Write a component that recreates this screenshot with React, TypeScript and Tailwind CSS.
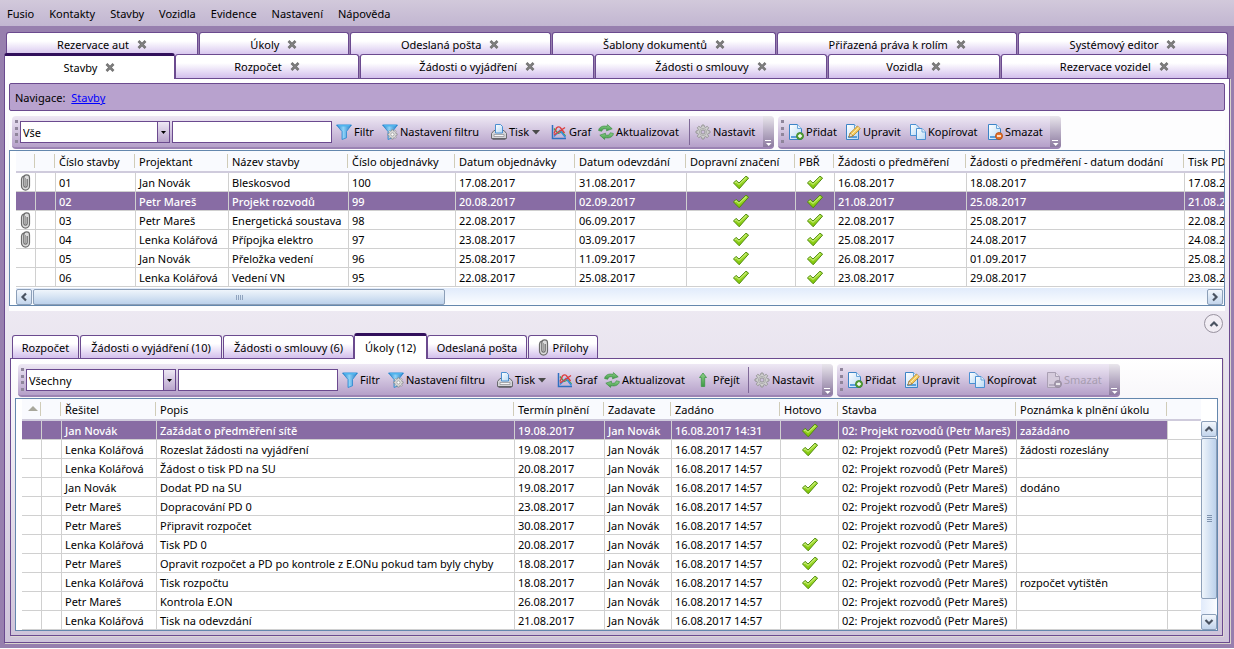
import React, { useState } from "react";
import clsx from "clsx";

type IconName =
  | "filter"
  | "filterSettings"
  | "print"
  | "chart"
  | "refresh"
  | "go"
  | "gear"
  | "add"
  | "edit"
  | "copy"
  | "remove"
  | "removeDisabled";

interface ToolItem {
  label: string;
  icon: IconName;
  width: string;
  disabled?: boolean;
  dropdown?: boolean;
  separated?: boolean;
}

interface Column {
  label: string;
  width: string;
  center?: boolean;
}

const GEAR =
  "M7 1h2l.4 1.9 1.2.5 1.6-1.1 1.5 1.5-1.1 1.6.5 1.2 1.9.4v2l-1.9.4-.5 1.2 1.1 1.6-1.5 1.5-1.6-1.1-1.2.5L9 15H7l-.4-1.9-1.2-.5-1.6 1.1-1.5-1.5 1.1-1.6-.5-1.2L1 9V7l1.9-.4.5-1.2-1.1-1.6 1.5-1.5 1.6 1.1 1.2-.5z";

// Shared gradients for the toolbar icons
const IconDefs = () => (
  <svg width="0" height="0" className="absolute" aria-hidden="true">
    <defs>
      <linearGradient id="funnel" x1="0" y1="0" x2="1" y2="0">
        <stop offset="0" stopColor="#1f7cc4" />
        <stop offset="0.45" stopColor="#8fd3f8" />
        <stop offset="1" stopColor="#2079c4" />
      </linearGradient>
      <linearGradient id="page" x1="0" y1="0" x2="1" y2="1">
        <stop offset="0" stopColor="#ffffff" />
        <stop offset="1" stopColor="#b7d9f5" />
      </linearGradient>
      <linearGradient id="check" x1="0" y1="0" x2="0" y2="1">
        <stop offset="0" stopColor="#b4e84a" />
        <stop offset="1" stopColor="#7cc400" />
      </linearGradient>
      <linearGradient id="leaf" x1="0" y1="0" x2="0" y2="1">
        <stop offset="0" stopColor="#8fd08a" />
        <stop offset="1" stopColor="#3d9a45" />
      </linearGradient>
    </defs>
  </svg>
);

const PageShape = ({ muted }: { muted?: boolean }) => (
  <>
    <path
      d="M1.500.5h8l4 4v11h-12z"
      fill={muted ? "#d5cbdc" : "url(#page)"}
      stroke={muted ? "#a99fb3" : "#3d84c6"}
    />
    <path
      d="M9.500.5v4h4"
      fill={muted ? "#e3dce8" : "#e8f3fc"}
      stroke={muted ? "#a99fb3" : "#69a5da"}
    />
    <path d="M3 12h9v2H3z" fill={muted ? "#b6acbf" : "#5a9fdb"} />
  </>
);

const Icon = ({ name }: { name: IconName }) => (
  <svg
    width="16"
    height="16"
    viewBox="0 0 16 16"
    className="shrink-0"
    aria-hidden="true"
  >
    {name === "filter" && (
      <>
        <path
          d="M.5 1h15l-5 6.500v6.300L6 15.500v-8z"
          fill="url(#funnel)"
          stroke="#2a86cf"
          strokeWidth=".8"
        />
        <path d="M1.500.8h13l-1.300 1.600H2.800z" fill="#4fb4ee" />
      </>
    )}
    {name === "filterSettings" && (
      <>
        <path
          d="M.5 1h15l-5 6.500v6.300L6 15.500v-8z"
          fill="url(#funnel)"
          stroke="#2a86cf"
          strokeWidth=".8"
        />
        <path d="M1.500.8h13l-1.300 1.600H2.800z" fill="#4fb4ee" />
        <g transform="translate(5 5) scale(.68)">
          <path d={GEAR} fill="#dcdcdc" stroke="#8a8a8a" />
          <circle cx="8" cy="8" r="2.400" fill="#fff" stroke="#8a8a8a" />
        </g>
      </>
    )}
    {name === "print" && (
      <>
        <path
          d="M3 6.500h10l2.500 3v5H.5v-5z"
          fill="#d4d4d8"
          stroke="#6b6b70"
        />
        <path d="M4.500 9V.5h5l2 2V9z" fill="url(#page)" stroke="#4b8fd0" />
        <path d="M3 10.500h10v2H3z" fill="#f8f8f8" stroke="#8d8d92" strokeWidth=".7" />
        <path d="M1.500 15.200h13" stroke="#55555a" />
      </>
    )}
    {name === "chart" && (
      <>
        <path d="M1.500 1v13.500H15" fill="none" stroke="#2f6fc0" strokeWidth="1.500" />
        <path d="m3 4.500 4 5 4-1.500 3.500 4" fill="none" stroke="#3fa650" strokeWidth="1.300" />
        <path d="m3 12.500 6-6 5.500 7" fill="none" stroke="#3b8de0" strokeWidth="1.500" />
        <path
          d="M3 9.500 5.500 4Q8 1.500 10 4.500L13.500 9M3 11l4.500-3L14 3.500"
          fill="none"
          stroke="#dc3f3f"
          strokeWidth="1.400"
        />
      </>
    )}
    {name === "refresh" && (
      <>
        <path
          d="M.6 6.500C1 3 5 1.200 9 2.500l.4-1.900 4.800 4.200-5.700 2 .2-1.800C6.200 4.200 4.200 5 3.700 7.200z"
          fill="url(#leaf)"
          stroke="#3f8f46"
          strokeWidth=".7"
        />
        <path
          d="M15.400 9.500c-.4 3.500-4.400 5.300-8.400 4l-.4 1.900-4.800-4.200 5.700-2-.2 1.800c2.500.8 4.500 0 5-2.200z"
          fill="url(#leaf)"
          stroke="#3f8f46"
          strokeWidth=".7"
        />
      </>
    )}
    {name === "go" && (
      <path
        d="M8 1l3.500 4.500H9.700V14.500H6.300V5.500H4.500z"
        fill="url(#leaf)"
        stroke="#3c9646"
        strokeWidth=".8"
      />
    )}
    {name === "gear" && (
      <>
        <path d={GEAR} fill="#cfcfcf" stroke="#929292" strokeWidth=".9" />
        <circle cx="8" cy="8" r="3.600" fill="none" stroke="#a4a4a4" strokeWidth=".8" />
        <circle cx="8" cy="8" r="2" fill="#cdbfdb" stroke="#8c8c8c" strokeWidth=".8" />
      </>
    )}
    {name === "add" && (
      <>
        <PageShape />
        <circle cx="12" cy="12" r="3.500" fill="#58a63a" stroke="#3a7d22" strokeWidth=".8" />
        <path d="M12 10v4M10 12h4" stroke="#fff" strokeWidth="1.400" />
      </>
    )}
    {name === "edit" && (
      <>
        <PageShape />
        <path
          d="m4 13 1-3.800L12.500 2 15.300 4.800 8 12z"
          fill="#f4c95a"
          stroke="#b98424"
          strokeWidth=".8"
        />
        <path d="m4 13 1-3.800L8 12z" fill="#f3e3c4" stroke="#8a6a3a" strokeWidth=".6" />
        <path d="m6.500 10.500 7.300-7" stroke="#fff0b8" />
      </>
    )}
    {name === "copy" && (
      <>
        <path d="M.5.5h5.500l3 3v8H.5z" fill="url(#page)" stroke="#4b90d2" />
        <path d="M6.500 4.500h5.500l3.500 3.500v7.500h-9z" fill="url(#page)" stroke="#4b90d2" />
        <path d="M12 4.500V8h3.500" fill="#e8f3fc" stroke="#69a5da" />
      </>
    )}
    {(name === "remove" || name === "removeDisabled") && (
      <>
        <PageShape muted={name === "removeDisabled"} />
        <circle
          cx="12"
          cy="12"
          r="3.500"
          fill={name === "remove" ? "#e4722a" : "#a79db0"}
          stroke={name === "remove" ? "#b34a10" : "#91879b"}
          strokeWidth=".8"
        />
        <path d="M10 12h4" stroke="#fff" strokeWidth="1.400" />
      </>
    )}
  </svg>
);

const CheckIcon = () => (
  <svg
    width="18"
    height="15"
    viewBox="0 0 18 15"
    className="mx-auto block"
    role="img"
    aria-label="Ano"
  >
    <path
      d="M1.500 8 4 5.400 7 8 14 1.200l2.600 1.900L7.200 13.800z"
      fill="url(#check)"
      stroke="#4f8a0c"
      strokeLinejoin="round"
    />
    <path d="M2.800 8 4 6.700l3 2.700 7.100-6.800" fill="none" stroke="#d9f59a" strokeWidth=".9" />
  </svg>
);

const ClipIcon = () => (
  <svg
    width="11"
    height="17"
    viewBox="0 0 11 17"
    className="block shrink-0"
    aria-hidden="true"
  >
    <rect x="1" y="1" width="8.500" height="15" rx="4.200" fill="#dcdcdc" />
    <path
      d="M7.200 5v6.500a1.700 1.700 0 0 1-3.400 0V3.800a2.800 2.800 0 0 1 5.700 0v8.300a4 4 0 0 1-8 0V5a4 4 0 0 1 2-3"
      fill="none"
      stroke="#6b6b6b"
      strokeWidth="1.200"
    />
    <path d="M5.500 4v8" stroke="#8f8f8f" strokeWidth=".8" />
  </svg>
);

const CloseIcon = () => (
  <svg width="10" height="9" viewBox="0 0 10 9" aria-hidden="true">
    <path d="m1.500 1 7 7m0-7-7 7" stroke="#6f6f6f" strokeWidth="2.600" />
    <path d="m2 1.500 6 6m0-6-6 6" stroke="#8f8f8f" strokeWidth=".8" />
  </svg>
);

const Chevron = ({ className }: { className?: string }) => (
  <svg width="10" height="8" viewBox="0 0 10 8" className={className} aria-hidden="true">
    <path d="M1.500 6 5 2.500 8.500 6" fill="none" stroke="#4a5361" strokeWidth="2.200" />
  </svg>
);

const menuItems = [
  "Fusio",
  "Kontakty",
  "Stavby",
  "Vozidla",
  "Evidence",
  "Nastavení",
  "Nápověda",
];

const upperTabs = [
  { label: "Rezervace aut", grow: "grow-[192]" },
  { label: "Úkoly", grow: "grow-[149]" },
  { label: "Odeslaná pošta", grow: "grow-[201]" },
  { label: "Šablony dokumentů", grow: "grow-[225]" },
  { label: "Přiřazená práva k rolím", grow: "grow-[240]" },
  { label: "Systémový editor", grow: "grow-[210]" },
];

const lowerTabs = [
  { label: "Stavby", grow: "grow-[171]" },
  { label: "Rozpočet", grow: "grow-[184]" },
  { label: "Žádosti o vyjádření", grow: "grow-[235]" },
  { label: "Žádosti o smlouvy", grow: "grow-[232]" },
  { label: "Vozidla", grow: "grow-[172]" },
  { label: "Rezervace vozidel", grow: "grow-[228]" },
];

const detailTabs = [
  { label: "Rozpočet", width: "w-[67px]" },
  { label: "Žádosti o vyjádření (10)", width: "w-[142px]" },
  { label: "Žádosti o smlouvy (6)", width: "w-[131px]" },
  { label: "Úkoly (12)", width: "w-[73px]" },
  { label: "Odeslaná pošta", width: "w-[100px]" },
  { label: "Přílohy", width: "w-[70px]", clip: true },
];

const filterTools: ToolItem[] = [
  { label: "Filtr", icon: "filter", width: "w-[46px]" },
  { label: "Nastavení filtru", icon: "filterSettings", width: "w-[109px]" },
  { label: "Tisk", icon: "print", width: "w-[60px]", dropdown: true },
  { label: "Graf", icon: "chart", width: "w-[47px]" },
  { label: "Aktualizovat", icon: "refresh", width: "w-[91px]" },
];
const goTool: ToolItem = { label: "Přejít", icon: "go", width: "w-[53px]" };
const setupTool: ToolItem = {
  label: "Nastavit",
  icon: "gear",
  width: "w-[68px]",
  separated: true,
};

const editTools: ToolItem[] = [
  { label: "Přidat", icon: "add", width: "w-[57px]" },
  { label: "Upravit", icon: "edit", width: "w-[65px]" },
  { label: "Kopírovat", icon: "copy", width: "w-[77px]" },
  { label: "Smazat", icon: "remove", width: "w-[63px]" },
];
const taskEditTools = editTools.map((tool) =>
  tool.icon === "remove"
    ? { ...tool, icon: "removeDisabled" as IconName, disabled: true }
    : tool,
);

const buildColumns: Column[] = [
  { label: "", width: "w-5" },
  { label: "", width: "w-5" },
  { label: "Číslo stavby", width: "w-20" },
  { label: "Projektant", width: "w-[93px]" },
  { label: "Název stavby", width: "w-[120px]" },
  { label: "Číslo objednávky", width: "w-[107px]" },
  { label: "Datum objednávky", width: "w-[120px]" },
  { label: "Datum odevzdání", width: "w-[111px]" },
  { label: "Dopravní značení", width: "w-[109px]", center: true },
  { label: "PBŘ", width: "w-[39px]", center: true },
  { label: "Žádosti o předměření", width: "w-[132px]" },
  { label: "Žádosti o předměření - datum dodání", width: "w-[218px]" },
  { label: "Tisk PD", width: "w-20" },
];

const clip = <ClipIcon />;
const yes = <CheckIcon />;

const buildRows: React.ReactNode[][] = [
  [clip, "", "01", "Jan Novák", "Bleskosvod", "100", "17.08.2017", "31.08.2017", yes, yes, "16.08.2017", "18.08.2017", "17.08.2017"],
  ["", "", "02", "Petr Mareš", "Projekt rozvodů", "99", "20.08.2017", "02.09.2017", yes, yes, "21.08.2017", "25.08.2017", "21.08.2017"],
  [clip, "", "03", "Petr Mareš", "Energetická soustava", "98", "22.08.2017", "06.09.2017", yes, yes, "22.08.2017", "25.08.2017", "22.08.2017"],
  [clip, "", "04", "Lenka Kolářová", "Přípojka elektro", "97", "23.08.2017", "03.09.2017", yes, yes, "25.08.2017", "24.08.2017", "24.08.2017"],
  ["", "", "05", "Jan Novák", "Přeložka vedení", "96", "25.08.2017", "11.09.2017", yes, yes, "26.08.2017", "01.09.2017", "25.08.2017"],
  ["", "", "06", "Lenka Kolářová", "Vedení VN", "95", "22.08.2017", "25.08.2017", yes, yes, "23.08.2017", "29.08.2017", "23.08.2017"],
];

const taskColumns: Column[] = [
  { label: "sort", width: "w-5" },
  { label: "", width: "w-5" },
  { label: "Řešitel", width: "w-[95px]" },
  { label: "Popis", width: "w-[358px]" },
  { label: "Termín plnění", width: "w-[90px]" },
  { label: "Zadavate", width: "w-[67px]" },
  { label: "Zadáno", width: "w-[109px]" },
  { label: "Hotovo", width: "w-[58px]", center: true },
  { label: "Stavba", width: "w-[178px]" },
  { label: "Poznámka k plnění úkolu", width: "w-[151px]" },
];

const tasks: [string, string, string, string, boolean, string][] = [
  ["Jan Novák", "Zažádat o předměření sítě", "19.08.2017", "14:31", true, "zažádáno"],
  ["Lenka Kolářová", "Rozeslat žádosti na vyjádření", "19.08.2017", "14:57", true, "žádosti rozeslány"],
  ["Lenka Kolářová", "Žádost o tisk PD na SU", "20.08.2017", "14:57", false, ""],
  ["Jan Novák", "Dodat PD na SU", "19.08.2017", "14:57", true, "dodáno"],
  ["Petr Mareš", "Dopracování PD 0", "23.08.2017", "14:57", false, ""],
  ["Petr Mareš", "Připravit rozpočet", "30.08.2017", "14:57", false, ""],
  ["Lenka Kolářová", "Tisk PD 0", "20.08.2017", "14:57", true, ""],
  ["Petr Mareš", "Opravit rozpočet a PD po kontrole z E.ONu pokud tam byly chyby", "18.08.2017", "14:57", true, ""],
  ["Lenka Kolářová", "Tisk rozpočtu", "18.08.2017", "14:57", true, "rozpočet vytištěn"],
  ["Petr Mareš", "Kontrola E.ON", "26.08.2017", "14:57", false, ""],
  ["Lenka Kolářová", "Tisk na odevzdání", "21.08.2017", "14:57", false, ""],
];

const taskRows: React.ReactNode[][] = tasks.map(
  ([who, what, due, time, done, note]) => [
    "",
    "",
    who,
    what,
    due,
    "Jan Novák",
    `16.08.2017 ${time}`,
    done ? yes : "",
    "02: Projekt rozvodů (Petr Mareš)",
    note,
  ],
);

const tabFace =
  "rounded-t-[3px] border border-[#6b4a8f] border-b-0 bg-linear-to-b from-white from-35% to-[#d3bfec]";
const activeTabFace =
  "relative z-10 -mb-px h-[26px] rounded-t-[3px] border border-t-3 border-b-0 border-[#6b4a8f] border-t-[#32105c] bg-white";

const DocumentTab = ({
  label,
  grow,
  active,
}: {
  label: string;
  grow: string;
  active?: boolean;
}) => (
  <div
    className={clsx(
      "flex basis-0 items-center justify-center gap-2",
      grow,
      active ? [activeTabFace, "-mr-px"] : ["h-6", tabFace],
    )}
  >
    <button type="button" className="leading-4">
      {label}
    </button>
    <button type="button" aria-label={`Zavřít ${label}`}>
      <CloseIcon />
    </button>
  </div>
);

const ToolGroup = ({ children }: { children: React.ReactNode }) => (
  <div className="flex h-[33px] overflow-hidden rounded-[4px] border-b-2 border-[#9b83b3] bg-linear-to-b from-[#eee8f4] to-[#b5a0c9]">
    <div className="my-1 ml-[3px] w-[3px] border-l-3 border-dotted border-[#8f859b]" />
    {children}
    <button
      type="button"
      aria-label="Další možnosti"
      className="flex w-[11px] items-end justify-center bg-linear-to-b from-[#e9e6ec] to-[#8d7ba0]"
    >
      <svg width="7" height="8" viewBox="0 0 7 8" aria-hidden="true">
        <path d="M0 1.500h6" stroke="#fff" />
        <path d="M1 4h5.500L3.700 7z" fill="#fff" />
      </svg>
    </button>
  </div>
);

const ToolButton = ({ tool }: { tool: ToolItem }) => (
  <>
    {tool.separated && <div className="mt-[3px] mr-[5px] h-[26px] w-px bg-[#7f6898]" />}
    <button
      type="button"
      disabled={tool.disabled}
      className={clsx(
        "flex items-center gap-[2px] pt-px whitespace-nowrap",
        tool.width,
        tool.disabled && "text-[#a79db0]",
      )}
    >
      <Icon name={tool.icon} />
      {tool.label}
      {tool.dropdown && (
        <svg width="8" height="5" viewBox="0 0 8 5" className="ml-px" aria-hidden="true">
          <path d="M0 0h8L4 4.500z" fill="#4a4a4a" />
        </svg>
      )}
    </button>
  </>
);

const Toolbar = ({
  filter,
  tools,
  edits,
}: {
  filter: string;
  tools: ToolItem[];
  edits: ToolItem[];
}) => (
  <div className="ml-[3px] flex gap-1">
    <ToolGroup>
      <div className="relative mt-[5px] ml-[2px] h-[22px] w-[150px]">
        <select
          aria-label="Pohled"
          className="h-full w-full appearance-none border border-[#6b4a8f] bg-white pt-px pl-[2px] outline-none"
        >
          <option>{filter}</option>
        </select>
        <span className="pointer-events-none absolute inset-y-0 right-0 flex w-[13px] items-center justify-center border border-[#6b4a8f] bg-linear-to-b from-[#eee8f4] to-[#b9a5cc]">
          <svg width="5" height="3" viewBox="0 0 5 3" aria-hidden="true">
            <path d="M0 0h5L2.500 3z" fill="#000" />
          </svg>
        </span>
      </div>
      <input
        type="text"
        aria-label="Hledat"
        className="mt-[5px] mr-1 ml-[2px] h-[22px] w-40 border border-[#6b4a8f] bg-white px-1 outline-none"
      />
      {tools.map((tool) => (
        <ToolButton key={tool.label} tool={tool} />
      ))}
    </ToolGroup>
    <ToolGroup>
      <div className="w-1" />
      {edits.map((tool) => (
        <ToolButton key={tool.label} tool={tool} />
      ))}
    </ToolGroup>
  </div>
);

const DataGrid = ({
  label,
  columns,
  rows,
  initial,
}: {
  label: string;
  columns: Column[];
  rows: React.ReactNode[][];
  initial: number;
}) => {
  const [selected, setSelected] = useState(initial);

  return (
    <table aria-label={label} className="w-full table-fixed border-separate border-spacing-0">
      <colgroup>
        {columns.map((column, i) => (
          <col key={i} className={column.width} />
        ))}
        <col />
      </colgroup>
      <thead>
        <tr className="h-[22px]">
          {columns.map((column, i) => (
            <th
              key={i}
              className="border-b-2 border-[#cfcbdc] bg-[#f9fafe] p-0 text-left font-normal"
            >
              <div className="mr-px h-[14px] border-r border-[#d0ccb8] pl-[3px] leading-4 whitespace-nowrap">
                {column.label === "sort" ? (
                  <svg
                    width="10"
                    height="5"
                    viewBox="0 0 10 5"
                    className="mx-auto translate-y-1"
                    role="img"
                    aria-label="Řazení"
                  >
                    <path d="M0 5 5 0l5 5z" fill="#a8a79c" />
                  </svg>
                ) : (
                  column.label
                )}
              </div>
            </th>
          ))}
          <td className="border-b-2 border-[#cfcbdc] bg-[#f9fafe] p-0" />
        </tr>
      </thead>
      <tbody>
        {rows.map((row, r) => (
          <tr key={r} className="h-[19px]" onClick={() => setSelected(r)}>
            {row.map((cell, c) => (
              <td
                key={c}
                className={clsx(
                  "border-r border-b border-[#d0d0d0] p-0 leading-4 whitespace-nowrap",
                  c === 0 ? "pl-1" : columns[c].center ? "" : "pt-px pl-[3px]",
                  r === selected && "bg-[#886ca4] font-medium text-white",
                )}
              >
                {cell}
              </td>
            ))}
            <td className="border-b border-[#d0d0d0] p-0" />
          </tr>
        ))}
      </tbody>
    </table>
  );
};

const scrollButton =
  "flex shrink-0 items-center justify-center rounded-[2px] border border-[#8c9fb8] bg-linear-to-b from-[#f3f7fc] to-[#c3d5ec]";

const App: React.FC = () => {
  return (
    <div className="min-h-screen bg-white font-['Noto_Sans','Open_Sans',sans-serif] text-[11px] leading-4 text-black">
      <IconDefs />

      {/* Main menu */}
      <nav className="flex h-[26px] items-center gap-[15px] bg-linear-to-b from-[#d2c9db] to-[#c2b6d1] px-[7px] pt-[2px]">
        {menuItems.map((item) => (
          <button key={item} type="button">
            {item}
          </button>
        ))}
      </nav>

      <div className="bg-[#977fae] px-1 pt-[6px] pb-[5px]">
        {/* Open documents */}
        <div className="mr-[2px] ml-[2px] flex h-[23px] gap-px">
          {upperTabs.map((tab) => (
            <DocumentTab key={tab.label} {...tab} />
          ))}
        </div>
        <div className="relative mr-[2px] flex h-[23px] items-end gap-px">
          {lowerTabs.map((tab, i) => (
            <DocumentTab key={tab.label} {...tab} active={i === 0} />
          ))}
        </div>

        <main className="border border-[#6b4a8f] bg-linear-to-b from-white via-[#e9e4ef] to-[#cfc4da] px-1 pt-1 pb-[6px] shadow-[1px_1px_0_#d9d3cc]">
          {/* Breadcrumb */}
          <div className="flex h-7 items-center gap-[6px] rounded-[2px] border border-[#6b4a8f] bg-[#b8a2ce] px-[5px] pt-[2px]">
            <span>Navigace:</span>
            <a href="#stavby" className="text-[#0000ff] underline">
              Stavby
            </a>
          </div>

          {/* Constructions */}
          <section className="bg-[#fdfdfe] pt-[5px] pb-[5px]">
            <Toolbar
              filter="Vše"
              tools={[...filterTools, setupTool]}
              edits={editTools}
            />
            <div className="mt-px border border-[#6487ad] bg-white pl-[6px]">
              <div className="overflow-hidden">
                <DataGrid
                  label="Stavby"
                  columns={buildColumns}
                  rows={buildRows}
                  initial={1}
                />
              </div>
              <div className="mt-px flex h-[17px] gap-px bg-linear-to-b from-[#e1ebfb] to-[#fbfdff] pt-px pr-px">
                <button
                  type="button"
                  aria-label="Posunout vlevo"
                  className={clsx(scrollButton, "w-4")}
                >
                  <Chevron className="-rotate-90" />
                </button>
                <div className="flex w-[412px] items-center justify-center rounded-[2px] border border-[#8c9fb8] bg-linear-to-b from-[#eff5fb] to-[#bcd1eb]">
                  <span className="flex gap-px">
                    {[0, 1, 2, 3].map((n) => (
                      <span key={n} className="h-[5px] w-px bg-[#8fa3be]" />
                    ))}
                  </span>
                </div>
                <button
                  type="button"
                  aria-label="Posunout vpravo"
                  className={clsx(scrollButton, "ml-auto w-4")}
                >
                  <Chevron className="rotate-90" />
                </button>
              </div>
            </div>
          </section>

          <div className="flex h-[22px] justify-end pt-[3px] pr-[2px]">
            <button
              type="button"
              aria-label="Sbalit"
              className="flex h-[19px] w-[19px] items-center justify-center rounded-full border border-[#98929f] bg-[#f1edf4]"
            >
              <Chevron />
            </button>
          </div>

          {/* Detail of the selected construction */}
          <section className="mr-[2px] ml-px">
            <div className="ml-[2px] flex h-[25px] items-end gap-px">
              {detailTabs.map((tab, i) => (
                <button
                  key={tab.label}
                  type="button"
                  className={clsx(
                    "flex shrink-0 items-center justify-center gap-1 pt-px whitespace-nowrap",
                    tab.width,
                    i === 3 ? [activeTabFace, "-mx-px"] : ["h-[23px]", tabFace],
                  )}
                >
                  {tab.clip && <ClipIcon />}
                  {tab.label}
                </button>
              ))}
            </div>
            <div className="border border-[#6b4a8f] bg-linear-to-b from-white to-[#cfc4da] p-1 pt-[5px] shadow-[1px_1px_0_#ded8d4]">
              <Toolbar
                filter="Všechny"
                tools={[...filterTools, goTool, setupTool]}
                edits={taskEditTools}
              />
              <div className="mt-px flex border border-[#6487ad] bg-white pl-[6px]">
                <div className="min-w-0 grow overflow-hidden">
                  <DataGrid
                    label="Úkoly"
                    columns={taskColumns}
                    rows={taskRows}
                    initial={0}
                  />
                </div>
                <div className="mt-[22px] flex w-4 shrink-0 flex-col gap-px bg-linear-to-r from-[#e1ebfb] to-[#fbfdff]">
                  <button
                    type="button"
                    aria-label="Posunout nahoru"
                    className={clsx(scrollButton, "h-4")}
                  >
                    <Chevron />
                  </button>
                  <div className="flex grow flex-col items-center justify-center gap-px rounded-[2px] border border-[#8c9fb8] bg-linear-to-r from-[#eff5fb] to-[#bcd1eb]">
                    {[0, 1, 2, 3].map((n) => (
                      <span key={n} className="h-px w-[5px] bg-[#7f93ae]" />
                    ))}
                  </div>
                  <button
                    type="button"
                    aria-label="Posunout dolů"
                    className={clsx(scrollButton, "mt-[14px] h-4")}
                  >
                    <Chevron className="rotate-180" />
                  </button>
                </div>
              </div>
            </div>
          </section>
        </main>
      </div>
    </div>
  );
};

export default App;
